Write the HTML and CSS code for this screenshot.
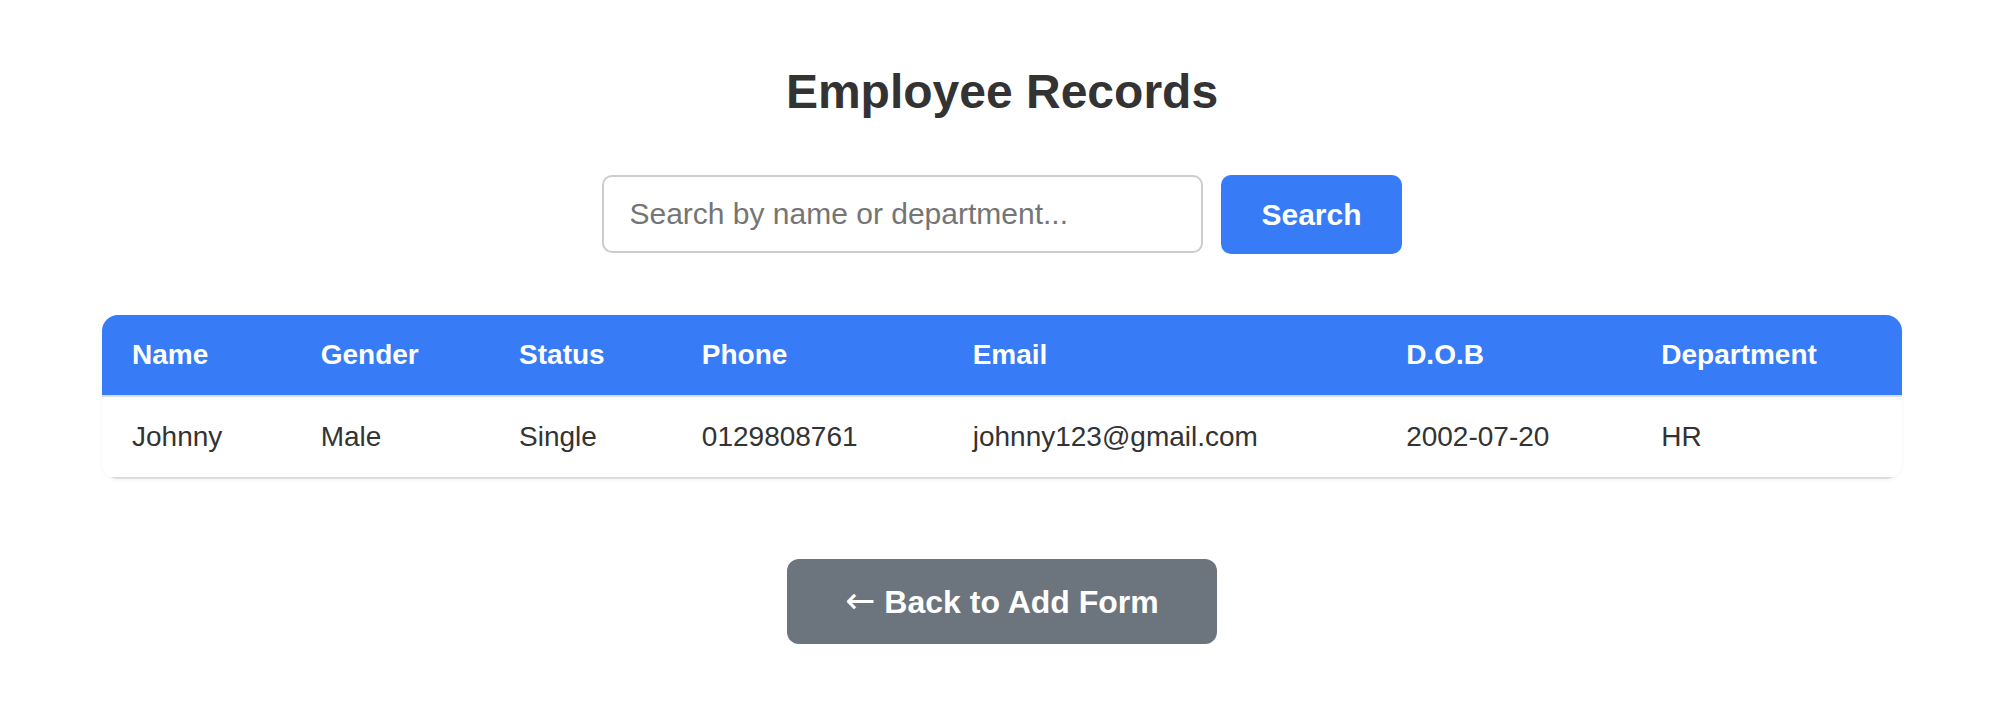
FILE: index.html
```html
<!DOCTYPE html>
<html lang="en">
<head>
<meta charset="utf-8">
<title>Employee Records</title>
<link rel="stylesheet" href="styles.css">
</head>
<body>
<main class="page">
  <h1 class="title">Employee Records</h1>
  <form class="search" onsubmit="return false">
    <input class="search-input" type="text" placeholder="Search by name or department...">
    <button class="search-btn" type="submit">Search</button>
  </form>
  <div class="table-card">
    <table class="records">
      <thead>
        <tr>
          <th>Name</th>
          <th>Gender</th>
          <th>Status</th>
          <th>Phone</th>
          <th>Email</th>
          <th>D.O.B</th>
          <th>Department</th>
        </tr>
      </thead>
      <tbody>
        <tr>
          <td>Johnny</td>
          <td>Male</td>
          <td>Single</td>
          <td>0129808761</td>
          <td>johnny123@gmail.com</td>
          <td>2002-07-20</td>
          <td>HR</td>
        </tr>
      </tbody>
    </table>
  </div>
  <div class="actions">
    <a class="back-btn" href="#"><span class="arrow">←</span> Back to Add Form</a>
  </div>
</main>
</body>
</html>
```
FILE: styles.css
```css
* {
  box-sizing: border-box;
}

body {
  margin: 0 0 0 8px;
  background: #ffffff;
  color: #333333;
  font-family: "Liberation Sans", Arial, Helvetica, sans-serif;
}

.page {
  max-width: 1800px;
  margin: 0 auto;
  padding-top: 64px;
}

.title {
  margin: 0 0 56px;
  font-size: 48px;
  font-weight: bold;
  text-align: center;
  color: #333333;
}

.search {
  display: flex;
  justify-content: center;
  gap: 18px;
  margin: 0 0 61px;
}

.search-input {
  width: 601px;
  height: 78px;
  padding: 0 25px;
  border: 2px solid #cccccc;
  border-radius: 10px;
  font-family: inherit;
  font-size: 30px;
  color: #333333;
  outline: none;
}

.search-input::placeholder {
  color: #757575;
}

.search-btn {
  height: 79px;
  padding: 0 40px;
  border: none;
  border-radius: 10px;
  background: #377cf6;
  color: #ffffff;
  font-family: inherit;
  font-size: 30px;
  font-weight: bold;
  cursor: pointer;
}

.table-card {
  border-radius: 16px;
  overflow: hidden;
  box-shadow: 0 1px 4px rgba(0, 0, 0, 0.05);
}

.records {
  width: 100%;
  border-collapse: collapse;
}

.records th,
.records td {
  padding: 24px 30px;
  font-size: 28px;
  text-align: left;
  border-bottom: 2px solid #dddddd;
}

.records th {
  background: #377cf6;
  color: #ffffff;
  font-weight: bold;
}

.records td {
  color: #333333;
  background: #ffffff;
}

.actions {
  margin-top: 80px;
  text-align: center;
}

.back-btn {
  display: inline-block;
  padding: 24px 58px;
  line-height: 36px;
  border-radius: 12px;
  background: #6c757d;
  color: #ffffff;
  font-size: 32px;
  font-weight: bold;
  text-decoration: none;
}

.arrow {
  font-family: "DejaVu Sans", sans-serif;
  font-weight: normal;
  font-size: 36px;
}
```
